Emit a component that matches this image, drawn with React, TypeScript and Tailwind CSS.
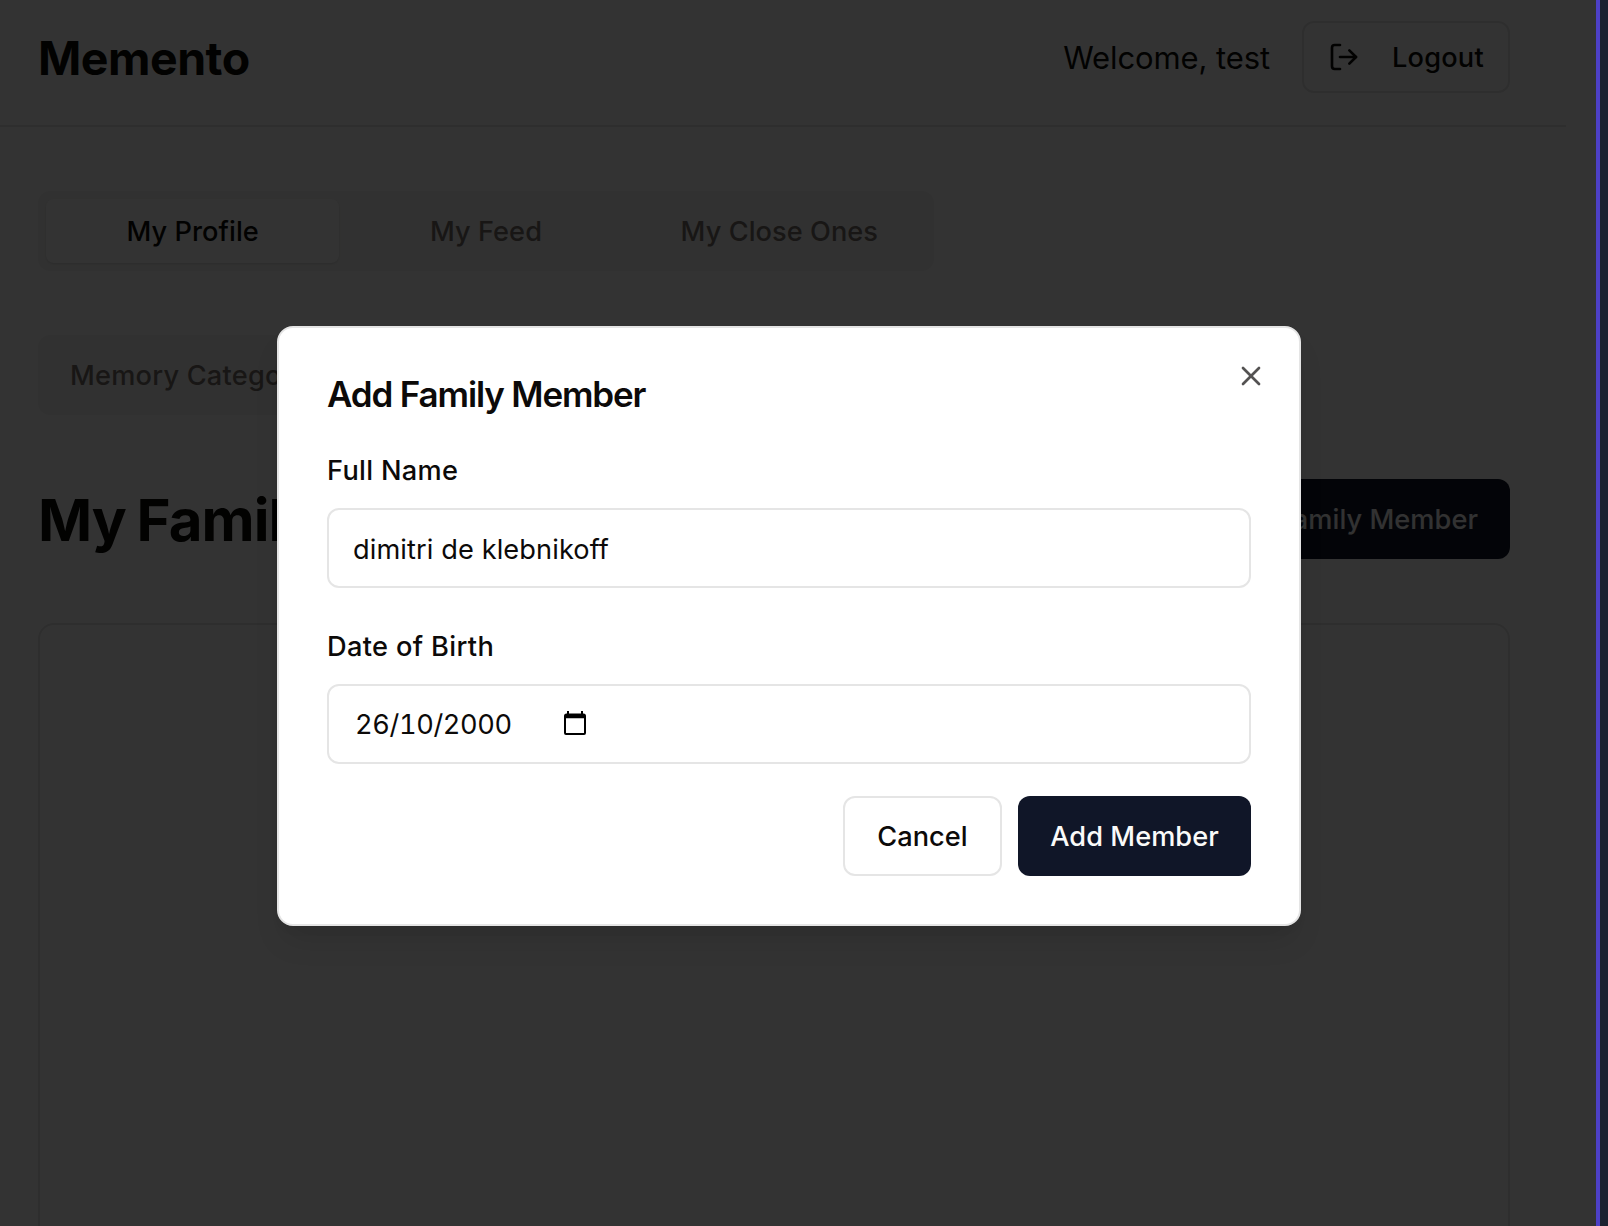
import { LogOut, Plus, X } from 'lucide-react';

function Header() {
  return (
    <header className="flex h-[127px] w-[1566px] items-start justify-between border-b-2 border-[#e5e5e5] pt-[21px] pr-14 pl-[38px]">
      <h1 className="mt-[5px] text-[46.5px] leading-16 font-bold tracking-[-0.5px]">Memento</h1>
      <div className="flex items-center gap-8">
        <span className="pt-0.5 text-[31px] leading-12 tracking-[-0.1px]">Welcome, test</span>
        <button className="flex h-18 w-52 items-center gap-8 rounded-xl border-2 border-[#e5e5e5] pl-6 text-[27.2px] font-medium tracking-[0.2px]">
          <LogOut size={32} />
          <span className="pt-0.5">Logout</span>
        </button>
      </div>
    </header>
  );
}

function Tabs() {
  return (
    <div className="grid h-20 w-[896px] grid-cols-3 rounded-xl bg-[#f5f5f4] p-2 text-[27.2px] font-medium tracking-[0.05px] text-[#78716c]">
      <div className="flex items-center justify-center rounded-lg bg-white pt-0.5 text-[#0c0a09] shadow">My Profile</div>
      <div className="flex items-center justify-center pt-0.5">My Feed</div>
      <div className="flex items-center justify-center pt-0.5">My Close Ones</div>
    </div>
  );
}

function Page() {
  return (
    <div className="h-full bg-white text-[#0c0a09]">
      <Header />
      <main className="flex h-[1200px] w-[1510px] flex-col pt-16 pl-[38px]">
        <Tabs />
        <div className="mt-16 flex h-20 w-[336px] items-center rounded-xl bg-[#f5f5f4] px-8 pt-0.5 text-[27.2px] font-medium whitespace-nowrap tracking-[0.22px] text-[#78716c]">
          Memory Categories
        </div>
        <div className="mt-16 flex h-20 items-center justify-between">
          <h2 className="pt-px text-[58.2px] leading-18 font-bold tracking-[-1px] [word-spacing:-2px]">My Family</h2>
          <button className="flex h-20 items-center gap-4 rounded-xl bg-[#0f172a] px-8 text-[27.2px] font-medium tracking-[0.05px] text-[#fafaf9]">
            <Plus size={32} />
            <span className="pt-0.5">Add Family Member</span>
          </button>
        </div>
        <div className="mt-16 grow rounded-2xl border-2 border-[#e5e5e5]" />
      </main>
    </div>
  );
}

function CalendarIcon() {
  return (
    <svg className="-mt-0.5" width="22" height="25" viewBox="0 0 22 25" aria-hidden="true">
      <path
        fillRule="evenodd"
        d="M3 0h2v2.500h12V0h2v2.500h.5A2.500 2.500 0 0 1 22 5v17a2 2 0 0 1-2 2H2a2 2 0 0 1-2-2V5a2.500 2.500 0 0 1 2.500-2.500H3zM2 7.200v14.800h18V7.200z"
      />
    </svg>
  );
}

function Dialog() {
  return (
    <section className="absolute top-[326px] left-[277px] h-[600px] w-[1024px] rounded-2xl border-2 border-[#e5e5e5] bg-white p-12 text-[#0c0a09] shadow-[0_20px_30px_-6px_rgba(0,0,0,0.1),0_8px_12px_-8px_rgba(0,0,0,0.1)]">
      <button className="absolute top-8 right-8 opacity-70" aria-label="Close">
        <X size={32} />
      </button>
      <h2 className="text-[35px] leading-9 font-semibold tracking-[-1.15px]">Add Family Member</h2>
      <form className="mt-[45px] flex flex-col">
        <label className="text-[27.2px] leading-7 font-medium tracking-[0.3px]">Full Name</label>
        <input
          className="mt-[23px] h-20 rounded-xl border-2 border-[#e5e5e5] px-6 pt-0.5 text-[27.2px] tracking-[0.1px]"
          defaultValue="dimitri de klebnikoff"
        />
        <label className="mt-[45px] text-[27.2px] leading-7 font-medium tracking-[0.35px]">Date of Birth</label>
        <div className="mt-[23px] flex h-20 items-center rounded-xl border-2 border-[#e5e5e5] px-6">
          <span className="w-[211px] pt-0.5 pl-0.5 text-[27.2px] tracking-[-0.38px] tabular-nums">26/10/2000</span>
          <CalendarIcon />
        </div>
        <div className="mt-8 flex justify-end gap-4 text-[27.2px] font-medium">
          <button type="button" className="h-20 w-[159px] rounded-xl border-2 border-[#e5e5e5] pt-0.5 tracking-[0.05px]">
            Cancel
          </button>
          <button type="button" className="h-20 w-[233px] rounded-xl bg-[#101628] pt-0.5 tracking-[0.05px] text-[#fafaf9]">
            Add Member
          </button>
        </div>
      </form>
    </section>
  );
}

export default function App() {
  return (
    <div className="relative flex h-[1226px] w-[1608px] overflow-hidden bg-[#1b2230] font-['Inter',sans-serif]">
      <div className="relative w-[1596px] overflow-hidden">
        <Page />
        <div className="absolute inset-0 bg-black/80" />
        <Dialog />
      </div>
      <div className="w-1 bg-[#4d40c6]" />
    </div>
  );
}
